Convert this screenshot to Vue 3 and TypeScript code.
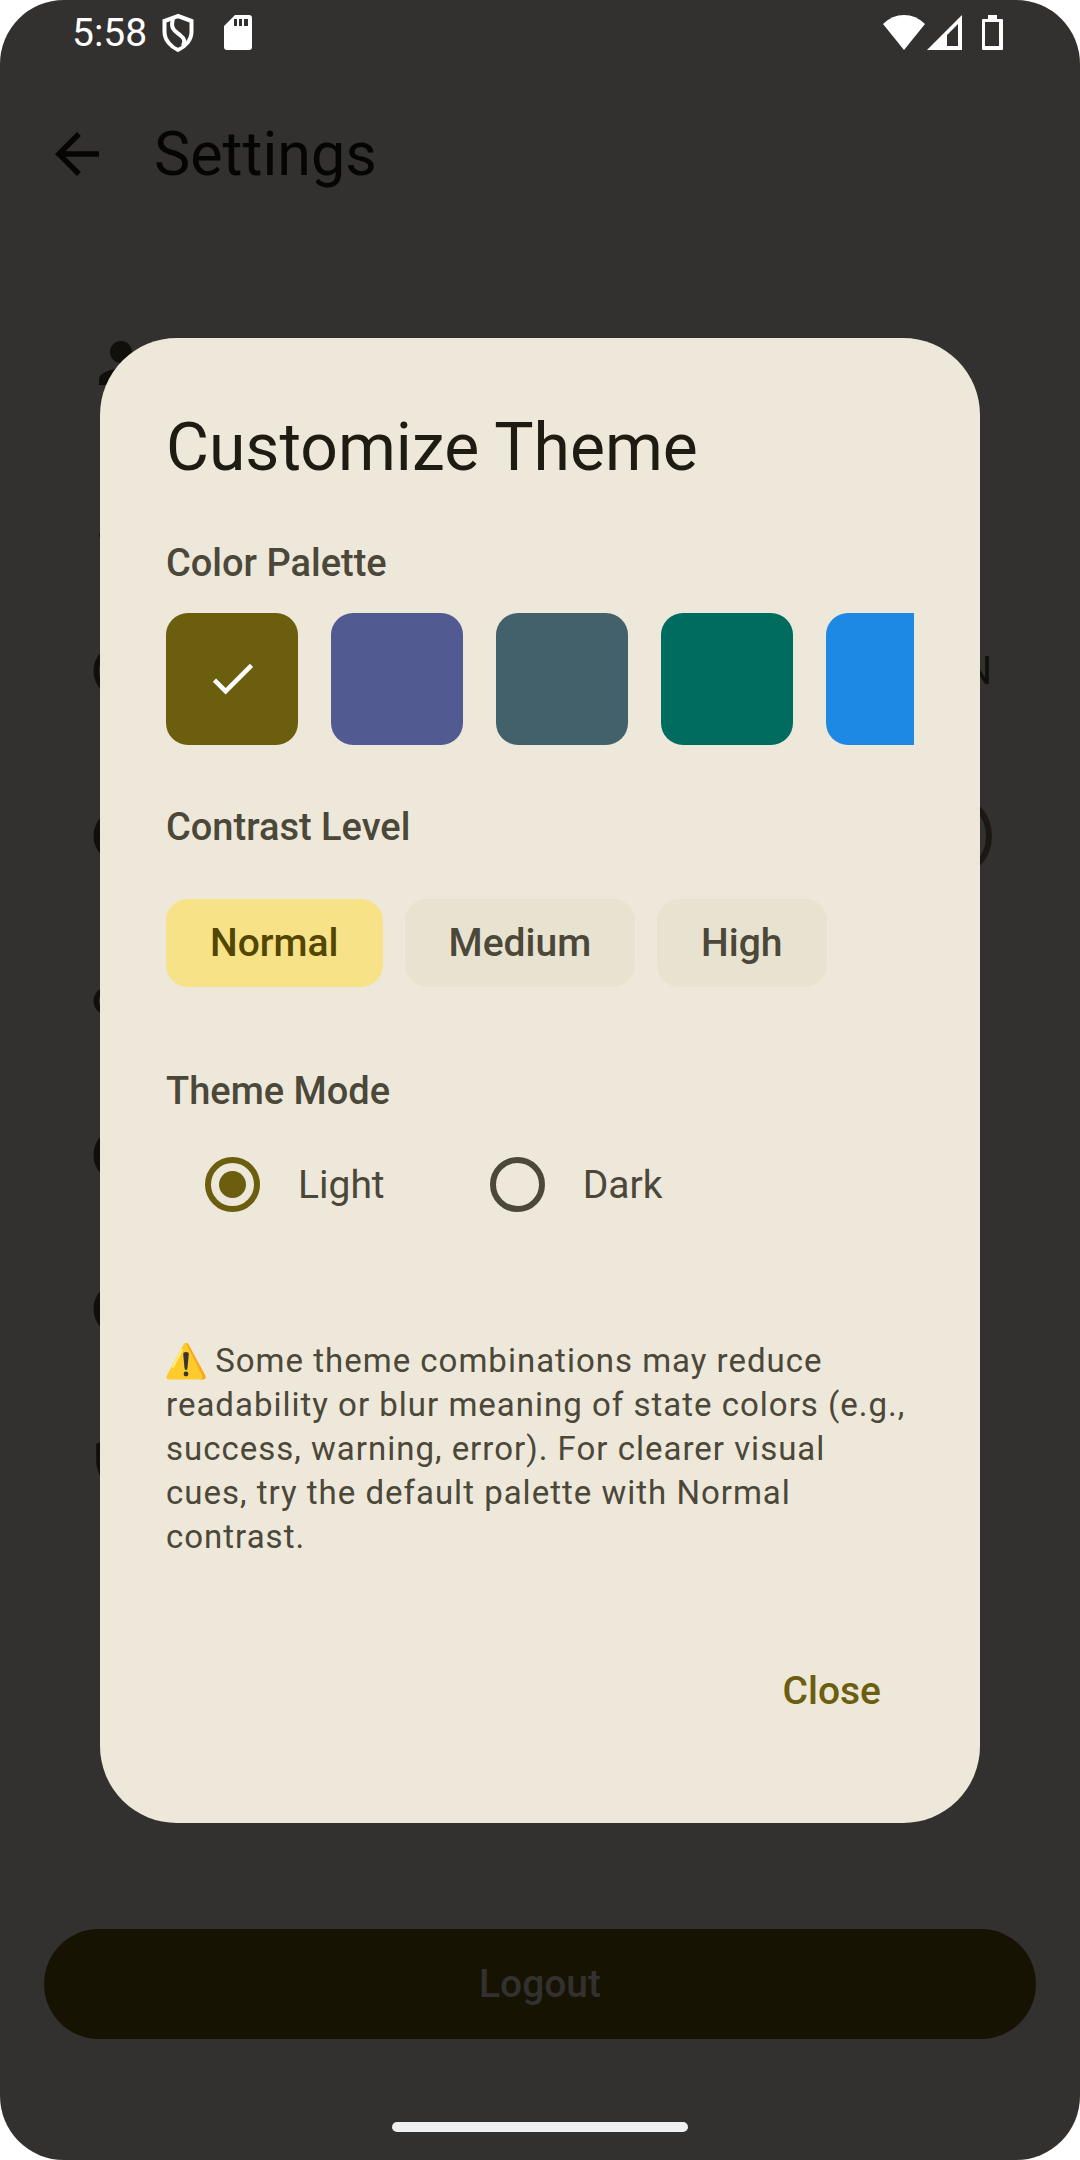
<script setup lang="ts">
import { ref } from 'vue'

interface Swatch {
  id: string
  color: string
}

const swatches: Swatch[] = [
  { id: 'olive', color: '#6b5e0f' },
  { id: 'indigo', color: '#515b92' },
  { id: 'slate', color: '#43616b' },
  { id: 'teal', color: '#006b5f' },
  { id: 'blue', color: '#1e88e5' },
]
const contrasts = ['Normal', 'Medium', 'High']
const modes = ['Light', 'Dark']

const palette = ref('olive')
const contrast = ref('Normal')
const mode = ref('Light')
const dynamicColor = ref(false)
</script>

<template>
  <div class="screen">
    <header class="status">
      <span class="clock">5:58</span>
      <svg class="shield" viewBox="0 0 32 38" aria-hidden="true">
        <path d="M16 2 29.500 7V18C29.500 26 23 33 16 36 9 33 2.500 26 2.500 18V7Z" />
        <path d="M11 5C8 15 13 17 18 21 23 25 23 27 21 32" />
      </svg>
      <svg class="card" viewBox="0 0 28 36" aria-hidden="true">
        <path
          fill-rule="evenodd"
          d="M11 0H25Q28 0 28 3V32Q28 35 25 35H3Q0 35 0 32V11ZM10 4V11H13V4ZM15 4V11H18V4ZM20 4V11H24V4Z"
        />
      </svg>
      <svg class="wifi" viewBox="0 0 42 36" aria-hidden="true">
        <path d="M0 9Q9 0 21 0T42 9L21 35Z" />
      </svg>
      <svg class="signal" viewBox="0 0 35 36" aria-hidden="true">
        <path fill-rule="evenodd" d="M35 0V35H0ZM31 9 20 20V31H31Z" />
      </svg>
      <svg class="battery" viewBox="0 0 22 36" aria-hidden="true">
        <path
          fill-rule="evenodd"
          d="M6 0H15V4H20Q21 4 21 5V34Q21 35 20 35H1Q0 35 0 34V5Q0 4 1 4H6ZM3 7V31H17V7Z"
        />
      </svg>
    </header>

    <div class="appbar">
      <button class="back" type="button" aria-label="Back">
        <svg class="icon" viewBox="0 0 24 24">
          <path d="M20 11H7.830l5.590-5.590L12 4l-8 8 8 8 1.410-1.410L7.830 13H20z" />
        </svg>
      </button>
      <h1>Settings</h1>
    </div>

    <main class="settings">
      <div class="row">
        <svg class="icon" viewBox="0 0 24 24">
          <path d="M12 12a4 4 0 1 0 0-8 4 4 0 0 0 0 8zm0 2c-2.670 0-8 1.340-8 4v2h16v-2c0-2.660-5.330-4-8-4z" />
        </svg>
      </div>
      <div class="row">
        <svg class="icon" viewBox="0 0 24 24"><circle cx="5" cy="18.500" r="1" /></svg>
      </div>
      <div class="row">
        <svg class="icon" viewBox="0 0 24 24">
          <path fill-rule="evenodd" d="M12 2a10 10 0 1 0 0 20 10 10 0 0 0 0-20zM12 4a8 8 0 1 1 0 16 8 8 0 0 1 0-16z" />
        </svg>
        <span class="value">EN</span>
      </div>
      <div class="row tall">
        <svg class="icon" viewBox="0 0 24 24"><circle cx="12" cy="12" r="10" /></svg>
        <input v-model="dynamicColor" class="switch" type="checkbox" role="switch" aria-label="Theme" />
      </div>
      <div class="row">
        <svg class="icon" viewBox="0 0 24 24">
          <path
            d="M3.900 12c0-1.710 1.390-3.100 3.100-3.100h4V7H7a5 5 0 0 0 0 10h4v-1.900H7A3.100 3.100 0 0 1 3.900 12zM8 13h8v-2H8v2zm9-6h-4v1.900h4a3.100 3.100 0 0 1 0 6.200h-4V17h4a5 5 0 0 0 0-10z"
          />
        </svg>
      </div>
      <div class="row">
        <svg class="icon" viewBox="0 0 24 24"><circle cx="12" cy="12" r="10" /></svg>
      </div>
      <div class="row">
        <svg class="icon" viewBox="0 0 24 24"><circle cx="12" cy="12" r="10" /></svg>
      </div>
      <div class="row">
        <svg class="icon" viewBox="0 0 24 24">
          <path d="M12 1 3 5v6c0 5.550 3.840 10.740 9 12 5.160-1.260 9-6.450 9-12V5z" />
        </svg>
      </div>
    </main>

    <button class="logout" type="button">Logout</button>
    <div class="home"></div>

    <div class="overlay">
      <section class="dialog" role="dialog" aria-modal="true" aria-labelledby="dialog-title">
        <h2 id="dialog-title">Customize Theme</h2>

        <h3>Color Palette</h3>
        <div class="swatches">
          <button
            v-for="s in swatches"
            :key="s.id"
            class="swatch"
            type="button"
            :aria-label="s.id"
            :aria-pressed="palette === s.id"
            :style="{ background: s.color }"
            @click="palette = s.id"
          >
            <svg v-if="palette === s.id" class="check" viewBox="0 0 24 24">
              <path d="M9 16.170 4.830 12l-1.420 1.410L9 19 21 7l-1.410-1.410z" />
            </svg>
          </button>
        </div>

        <h3>Contrast Level</h3>
        <div class="chips">
          <button
            v-for="c in contrasts"
            :key="c"
            class="chip"
            type="button"
            :class="{ selected: contrast === c }"
            :aria-pressed="contrast === c"
            @click="contrast = c"
          >
            {{ c }}
          </button>
        </div>

        <h3>Theme Mode</h3>
        <div class="modes">
          <label v-for="m in modes" :key="m" class="mode">
            <input v-model="mode" type="radio" name="mode" :value="m" />
            <span>{{ m }}</span>
          </label>
        </div>

        <p class="note">
          <svg class="warning" viewBox="0 0 40 38" role="img" aria-label="Warning">
            <path
              d="M17.500 2.500Q20 -1 22.500 2.500L39 33Q41 37.500 36.500 37.500H3.500Q-1 37.500 1 33Z"
              fill="#ffca2c"
            />
            <path d="M22.500 2.500 39 33Q41 37.500 36.500 37.500H34Q38 37 36 33L20 1Q21.500 .5 22.500 2.500Z" fill="#f7a823" />
            <path d="M16 8 7 25" stroke="#fff176" stroke-width="2" stroke-linecap="round" />
            <path d="M17.200 12Q17.200 10 20 10T22.800 12L21.500 26Q21.300 28 20 28T18.500 26Z" fill="#3a3531" />
            <circle cx="20" cy="32" r="2.400" fill="#3a3531" />
          </svg>
          Some theme combinations may reduce readability or blur meaning of state colors (e.g.,
          success, warning, error). For clearer visual<br />
          cues, try the default palette with Normal contrast.
        </p>

        <div class="actions">
          <button class="close" type="button">Close</button>
        </div>
      </section>
    </div>
  </div>
</template>

<style>
body {
  background: #fff;
}
</style>

<style scoped>
.screen {
  position: relative;
  box-sizing: border-box;
  display: flex;
  flex-direction: column;
  min-height: 100vh;
  padding-bottom: 28px;
  border-radius: 64px;
  background: #333130;
  color: #050502;
  font-family: Roboto, "Liberation Sans", sans-serif;
}
button {
  padding: 0;
  border: 0;
  background: none;
  font: inherit;
  color: inherit;
}
h1,
h2,
h3,
p {
  margin: 0;
  font-weight: 400;
}
.icon {
  display: block;
  width: 66px;
  height: 66px;
  fill: currentColor;
}
.status {
  display: flex;
  align-items: center;
  height: 66px;
  padding: 0 76px 0 72px;
  color: #fff;
}
.status svg {
  fill: currentColor;
}
.clock {
  font-size: 39px;
  line-height: 66px;
}
.shield {
  width: 32px;
  height: 38px;
  margin-left: 15px;
  stroke: currentColor;
  stroke-width: 4;
}
.status .shield {
  fill: none;
}
.card {
  width: 28px;
  height: 36px;
  margin-left: 30px;
}
.wifi {
  width: 42px;
  height: 36px;
  margin-left: auto;
}
.signal {
  width: 35px;
  height: 36px;
  margin-left: 2px;
}
.battery {
  width: 22px;
  height: 36px;
  margin-left: 20px;
}
.appbar {
  display: flex;
  align-items: center;
  gap: 11px;
  height: 176px;
  padding: 0 11px;
}
.back {
  display: grid;
  place-items: center;
  width: 132px;
  height: 132px;
}
h1 {
  font-size: 61px;
  line-height: 77px;
}
.settings {
  padding: 44px 88px 0;
  color: #100f0b;
}
.row {
  display: flex;
  align-items: center;
  justify-content: space-between;
  height: 154px;
}
.row.tall {
  height: 176px;
}
.value {
  font-size: 39px;
  line-height: 55px;
}
.switch {
  appearance: none;
  box-sizing: border-box;
  width: 143px;
  height: 88px;
  margin: 0;
  border: 6px solid #191813;
  border-radius: 44px;
}
.logout {
  height: 110px;
  margin: auto 44px 83px;
  border-radius: 55px;
  background: #161302;
  color: #333130;
  font-size: 39px;
  font-weight: 500;
}
.home {
  align-self: center;
  width: 296px;
  height: 10px;
  border-radius: 5px;
  background: #f0f0f0;
}
.overlay {
  position: absolute;
  inset: 0;
  display: flex;
  align-items: center;
  padding: 0 100px;
}
.dialog {
  box-sizing: border-box;
  width: 100%;
  padding: 66px;
  border-radius: 77px;
  background: #eee8da;
  color: #4b4739;
}
h2 {
  margin-bottom: 44px;
  color: #1e1b13;
  font-size: 66px;
  line-height: 88px;
}
h3 {
  font-size: 38px;
  font-weight: 500;
  line-height: 55px;
}
.swatches {
  display: flex;
  gap: 33px;
  margin: 22px 0 55px;
  overflow: hidden;
}
.swatch {
  display: grid;
  flex: none;
  place-items: center;
  width: 132px;
  height: 132px;
  border-radius: 22px;
}
.check {
  width: 55px;
  height: 55px;
  fill: #fff;
}
.chips {
  display: flex;
  gap: 22px;
  margin: 44px 0 77px;
}
.chip {
  height: 88px;
  padding: 0 44px;
  border-radius: 22px;
  background: #e8e2d0;
  font-size: 39px;
  font-weight: 500;
}
.chip.selected {
  background: #f8e287;
  color: #534600;
}
.modes {
  display: flex;
  gap: 66px;
  margin-bottom: 88px;
}
.mode {
  display: flex;
  align-items: center;
  height: 132px;
  font-size: 39px;
}
.mode input {
  appearance: none;
  box-sizing: border-box;
  display: grid;
  place-items: center;
  width: 55px;
  height: 55px;
  margin: 0 38px 0 39px;
  border: 6px solid #4b4739;
  border-radius: 50%;
}
.mode input:checked {
  border-color: #6b5e0f;
}
.mode input:checked::before {
  width: 27px;
  height: 27px;
  border-radius: 50%;
  background: #6b5e0f;
  content: "";
}
.note {
  margin-bottom: 66px;
  font-size: 33px;
  letter-spacing: 1px;
  line-height: 44px;
}
.warning {
  width: 40px;
  height: 38px;
  vertical-align: -8px;
  fill: none;
}
.actions {
  display: flex;
  justify-content: flex-end;
}
.close {
  height: 132px;
  padding: 0 33px;
  color: #6b5e0f;
  font-size: 39px;
  font-weight: 500;
}
</style>
